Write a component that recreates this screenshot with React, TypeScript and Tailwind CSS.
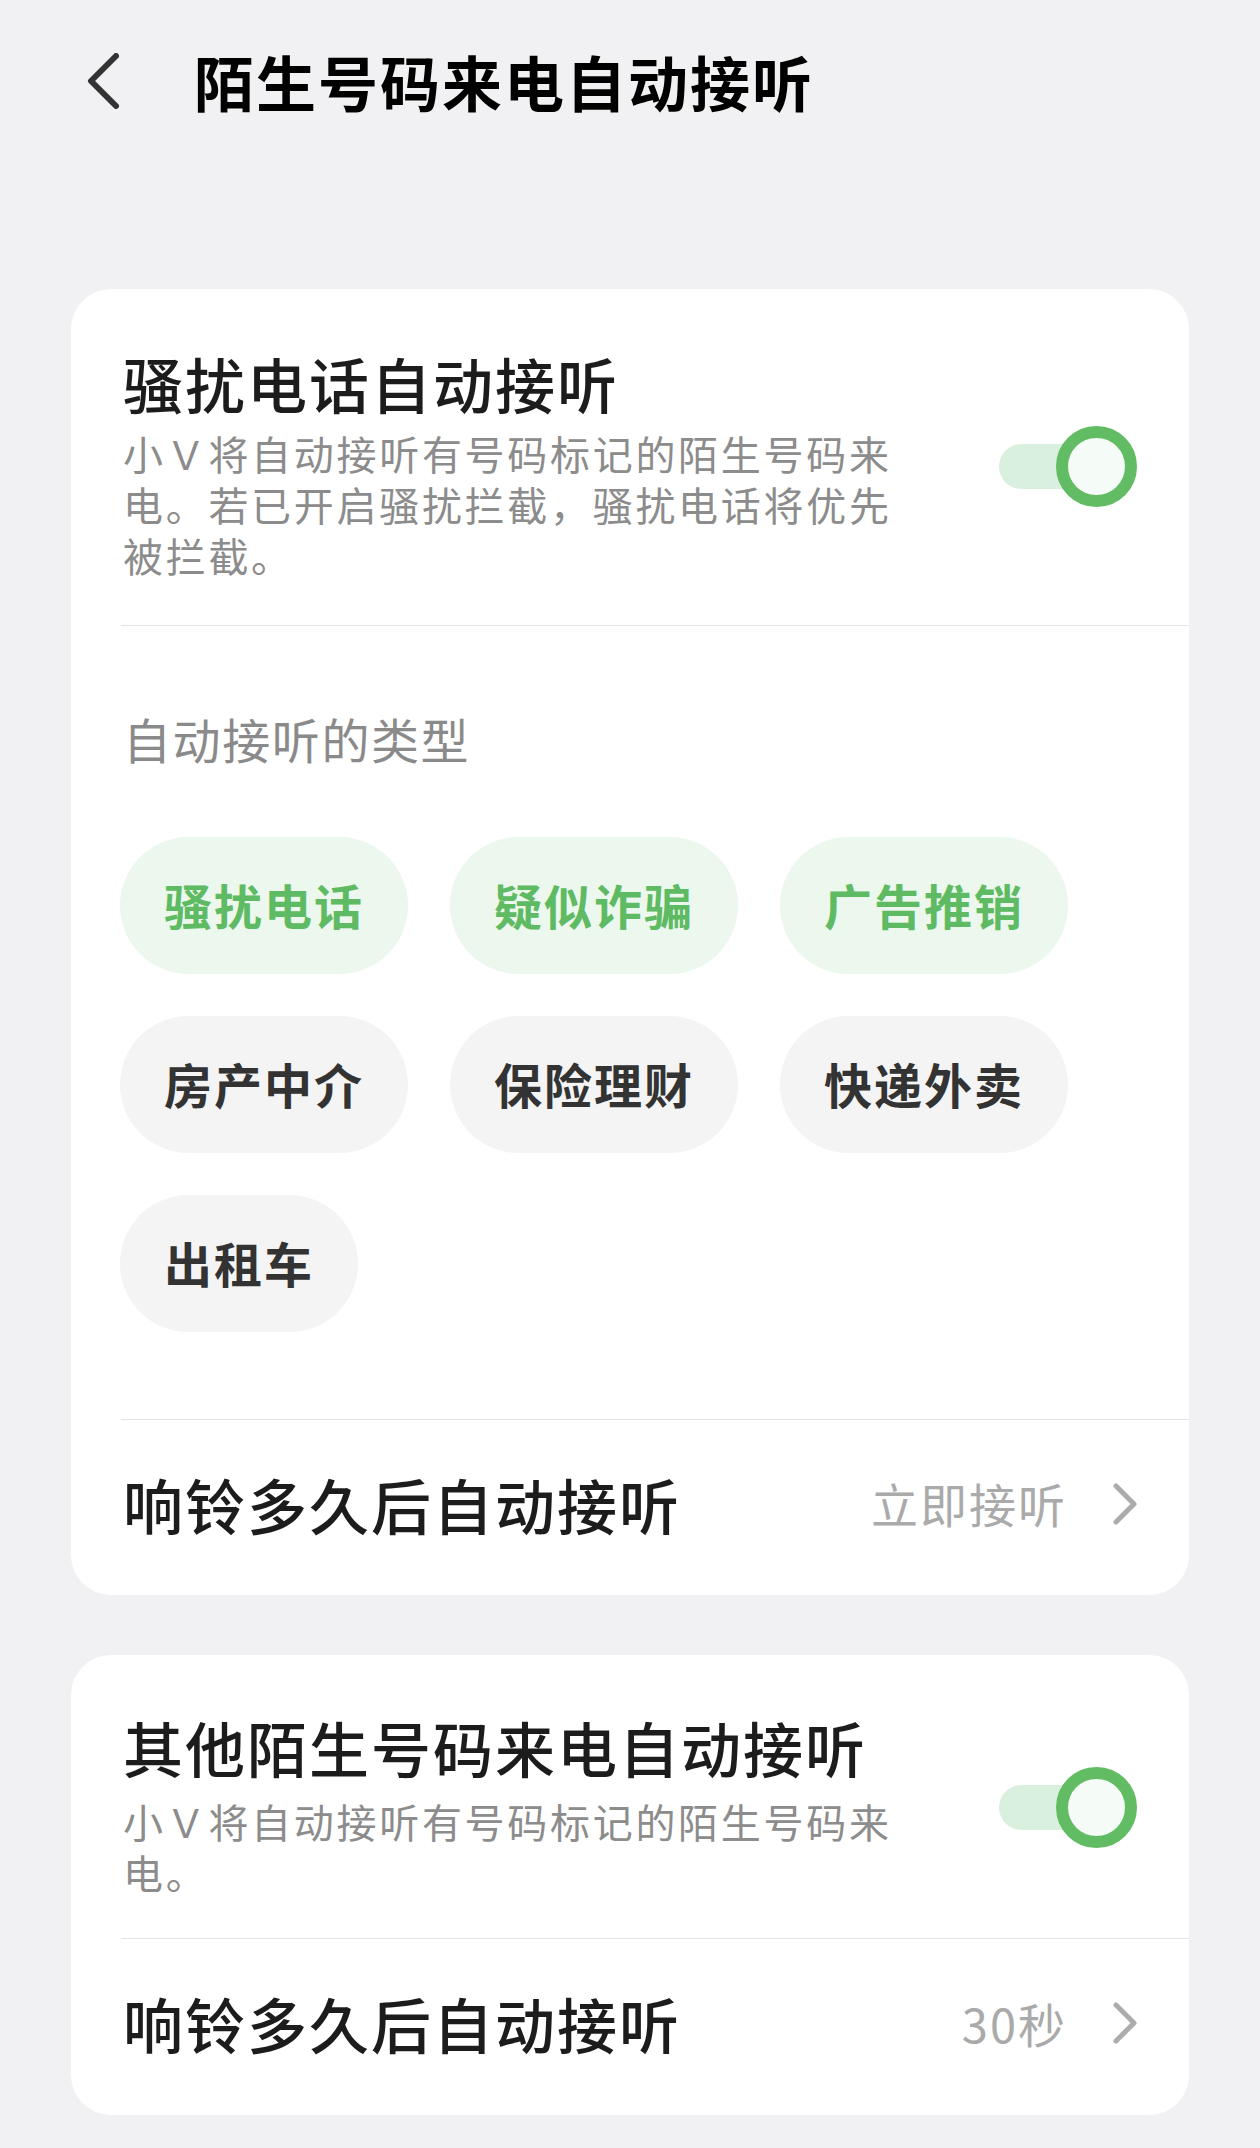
import React from "react";

const chips = [
  { label: "骚扰电话", on: true },
  { label: "疑似诈骗", on: true },
  { label: "广告推销", on: true },
  { label: "房产中介", on: false },
  { label: "保险理财", on: false },
  { label: "快递外卖", on: false },
  { label: "出租车", on: false },
];

function Toggle() {
  return (
    <div className="relative h-[81px] w-[138px] shrink-0">
      <div className="absolute left-0 top-[18px] h-[45px] w-[120px] rounded-full bg-[#daf0de]" />
      <div className="absolute right-0 top-0 h-[81px] w-[81px] rounded-full border-[12px] border-[#62bc64] bg-[#f5fbf6]" />
    </div>
  );
}

function Chevron() {
  return (
    <svg width="24" height="42" viewBox="0 0 24 42" fill="none" className="shrink-0">
      <polyline
        points="3,3 21,21 3,39"
        stroke="#acacac"
        strokeWidth="5"
        strokeLinecap="round"
        strokeLinejoin="round"
      />
    </svg>
  );
}

function Desc({ lines }: { lines: string[] }) {
  return (
    <div className="text-[40px] leading-[51px] tracking-[2.7px] text-[#8c8c8c]">
      {lines.map((l) => (
        <div key={l} className="whitespace-nowrap">
          {l}
        </div>
      ))}
    </div>
  );
}

function DelayRow({ value, h }: { value: string; h: string }) {
  return (
    <div className={`flex items-center pb-[8px] pl-[52px] pr-[52px] ${h}`}>
      <div className="flex-1 text-[60px] font-medium tracking-[2px] text-[#1c1c1c]">
        响铃多久后自动接听
      </div>
      <div className="mr-[46px] text-[47px] tracking-[2px] text-[#aaaaaa]">{value}</div>
      <Chevron />
    </div>
  );
}

export default function App() {
  return (
    <div className="min-h-screen bg-[#f1f1f3] pb-[35px] font-['Noto_Sans_CJK_SC','Noto_Sans',sans-serif]">
      {/* header */}
      <div className="flex h-[162px] items-center pl-[87px]">
        <svg width="32" height="56" viewBox="0 0 32 56" fill="none">
          <polyline
            points="29,3 4,28 29,53"
            stroke="#333333"
            strokeWidth="6"
            strokeLinecap="round"
            strokeLinejoin="round"
          />
        </svg>
        <h1 className="ml-[75px] text-[60px] font-bold tracking-[2px] text-black">
          陌生号码来电自动接听
        </h1>
      </div>

      {/* card 1 */}
      <div className="mx-[71px] mt-[127px] rounded-[40px] bg-white">
        <div className="flex items-center px-[52px] pb-[44px] pt-[63px]">
          <div className="flex-1">
            <div className="text-[60px] font-medium leading-[62px] tracking-[2px] text-[#1c1c1c]">
              骚扰电话自动接听
            </div>
            <div className="mt-[14px]">
              <Desc
                lines={[
                  "小Ｖ将自动接听有号码标记的陌生号码来",
                  "电。若已开启骚扰拦截，骚扰电话将优先",
                  "被拦截。",
                ]}
              />
            </div>
          </div>
          <Toggle />
        </div>
        <div className="ml-[50px] h-px bg-[#e3e3e3]" />

        <div className="px-[49px] pb-[87px] pt-[87px]">
          <div className="pl-[3px] text-[48px] leading-[50px] tracking-[1.6px] text-[#8a8a8a]">
            自动接听的类型
          </div>
          <div className="mt-[74px] flex flex-wrap gap-[42px]">
            {chips.map((c) =>
              c.on ? (
                <div
                  key={c.label}
                  className="flex h-[137px] items-center rounded-full bg-[#ecf7ee] px-[44px] pb-[4px] text-[48px] font-bold tracking-[2px] text-[#5fbb63]"
                >
                  {c.label}
                </div>
              ) : (
                <div
                  key={c.label}
                  className="flex h-[137px] items-center rounded-full bg-[#f4f4f4] px-[44px] pb-[4px] text-[48px] font-bold tracking-[2px] text-[#333333]"
                >
                  {c.label}
                </div>
              )
            )}
          </div>
        </div>
        <div className="ml-[50px] h-px bg-[#e3e3e3]" />
        <DelayRow value="立即接听" h="h-[175px]" />
      </div>

      {/* card 2 */}
      <div className="mx-[71px] mt-[60px] rounded-[40px] bg-white">
        <div className="flex items-center px-[52px] pb-[40px] pt-[61px]">
          <div className="flex-1">
            <div className="text-[60px] font-medium leading-[62px] tracking-[2px] text-[#1c1c1c]">
              其他陌生号码来电自动接听
            </div>
            <div className="mt-[18px]">
              <Desc lines={["小Ｖ将自动接听有号码标记的陌生号码来", "电。"]} />
            </div>
          </div>
          <Toggle />
        </div>
        <div className="ml-[50px] h-px bg-[#e3e3e3]" />
        <DelayRow value="30秒" h="h-[176px]" />
      </div>
    </div>
  );
}
